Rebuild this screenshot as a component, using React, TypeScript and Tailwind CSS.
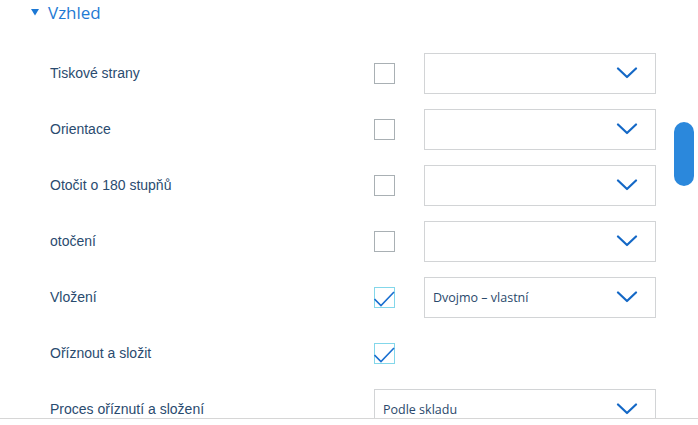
import React from 'react';

type Row = {
    label: string;
    checkbox?: boolean;
    checked?: boolean;
    select?: boolean;
    value?: string;
    wide?: boolean;
};

const rows: Row[] = [
    { label: 'Tiskové strany', checkbox: true, select: true },
    { label: 'Orientace', checkbox: true, select: true },
    { label: 'Otočit o 180 stupňů', checkbox: true, select: true },
    { label: 'otočení', checkbox: true, select: true },
    { label: 'Vložení', checkbox: true, checked: true, select: true, value: 'Dvojmo – vlastní' },
    { label: 'Oříznout a složit', checkbox: true, checked: true },
    { label: 'Proces oříznutí a složení', select: true, wide: true, value: 'Podle skladu' },
];

function Chevron() {
    return (
        <svg width="22" height="12" viewBox="0 0 22 12" fill="none" aria-hidden="true">
            <path d="M2 1.5 L11 10 L20 1.5" stroke="#1468c6" strokeWidth="2.2" strokeLinecap="round" strokeLinejoin="round" />
        </svg>
    );
}

function Checkbox({ checked }: { checked?: boolean }) {
    if (checked) {
        return (
            <div className="relative size-[21px] border border-[#83d7ea]">
                <svg className="absolute -left-px -top-px" width="21" height="21" viewBox="0 0 21 21" fill="none" aria-hidden="true">
                    <path d="M0.5 12 L7 18.5 L20 5" stroke="#1a6fd0" strokeWidth="1.6" />
                </svg>
            </div>
        );
    }
    return <div className="size-[21px] border border-[#a9b0b4]" />;
}

function Select({ value, wide }: { value?: string; wide?: boolean }) {
    return (
        <div
            className={
                wide
                    ? 'flex h-[41px] w-[282px] items-center justify-between border border-[#d2d4d6] pl-[8px] pr-[17px]'
                    : 'flex h-[41px] w-[232px] items-center justify-between border border-[#d2d4d6] pl-[8px] pr-[17px]'
            }
        >
            <span className="pt-[3px] font-['Open_Sans',sans-serif] text-[12.5px] text-[#2a496c]">{value ?? ''}</span>
            <Chevron />
        </div>
    );
}

export default function App() {
    return (
        <div className="relative h-[425px] w-[698px] overflow-hidden bg-white">
            <div className="relative h-[419px] overflow-hidden border-b border-[#d6d6d6]">
                <div className="flex h-6 items-center pl-[31px]">
                    <svg width="8" height="7" viewBox="0 0 8 7" aria-hidden="true">
                        <path d="M0 0 H8 L4 6.5 Z" fill="#1c78d4" />
                    </svg>
                    <span className="ml-[9px] font-['Open_Sans',sans-serif] text-[17px] leading-none text-[#1f7ad4]">
                        Vzhled
                    </span>
                </div>

                <div className="mt-[21px] flex flex-col">
                    {rows.map((row) => (
                        <div key={row.label} className="flex h-[56px] items-center">
                            <div className="w-[374px] pl-[50px] font-['Liberation_Sans',Arial,sans-serif] text-[14px] text-[#2a4b6f]">
                                {row.label}
                            </div>
                            {row.wide ? (
                                <Select value={row.value} wide />
                            ) : (
                                <>
                                    <div className="w-[50px]">
                                        {row.checkbox ? <Checkbox checked={row.checked} /> : null}
                                    </div>
                                    {row.select ? <Select value={row.value} /> : null}
                                </>
                            )}
                        </div>
                    ))}
                </div>

                <div className="absolute left-[674px] top-[122px] h-[64px] w-[20px] rounded-full bg-[#2b88dc]" />
            </div>
        </div>
    );
}
